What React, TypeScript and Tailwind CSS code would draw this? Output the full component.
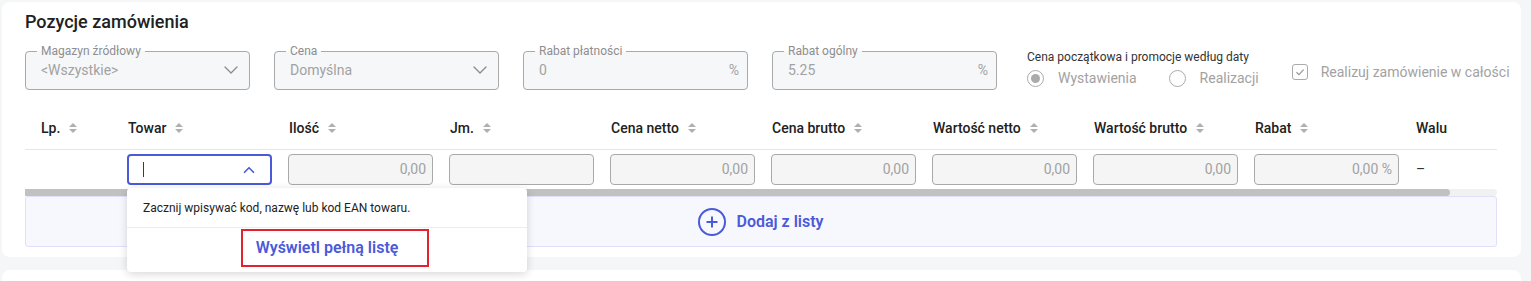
import React from "react";
import { ChevronDown, ChevronUp } from "lucide-react";

const SortIcon = () => (
  <svg width="10" height="12" viewBox="0 0 10 12" className="shrink-0">
    <path d="M5 1 L9 5 L1 5 Z" fill="#b0b0b0" />
    <path d="M5 11 L9 7 L1 7 Z" fill="#b0b0b0" />
  </svg>
);

const Field = ({ label, value, suffix, chevron }: { label: string; value: string; suffix?: string; chevron?: boolean }) => (
  <fieldset className="w-[225px] h-[46px] shrink-0 border border-[#a9a9a9] rounded-[4px] bg-[#f6f7f9] px-[11px] min-w-0">
    <legend className="px-[4px] text-[12px] leading-[14px] text-[#8e8e8e]">{label}</legend>
    <div className="flex items-center justify-between h-[24px] pl-[4px]">
      <span className="text-[14px] text-[#a2a2a2]">{value}</span>
      {chevron ? (
        <ChevronDown size={24} strokeWidth={1.3} color="#8a8a8a" className="mr-[-5px]" />
      ) : (
        <span className="text-[14px] text-[#a2a2a2] mr-[-3px]">{suffix}</span>
      )}
    </div>
  </fieldset>
);

const Radio = ({ checked, label }: { checked?: boolean; label: string }) => (
  <div className="flex items-center">
    <span className="w-[17px] h-[17px] rounded-full border border-[#ababab] flex items-center justify-center bg-white">
      {checked && <span className="w-[9px] h-[9px] rounded-full bg-[#ababab]" />}
    </span>
    <span className="ml-[14px] text-[14px] leading-[20px] text-[#a2a2a2]">{label}</span>
  </div>
);

const cols = ["Towar", "Ilość", "Jm.", "Cena netto", "Cena brutto", "Wartość netto", "Wartość brutto", "Rabat"];

const NumInput = ({ v }: { v: string }) => (
  <div className="w-[145px] h-[31px] border border-[#a9a9a9] rounded-[4px] bg-[#f5f5f5] flex items-center justify-end pr-[6px] text-[14px] text-[#a2a2a2]">
    {v}
  </div>
);

export default function App() {
  return (
    <div className="w-full h-[281px] overflow-hidden bg-[#f5f6f7] pt-[2px] pl-[2px] font-[family-name:Roboto,sans-serif] text-[#212121]">
      <div className="relative w-[1519px] h-[255px] bg-white rounded-[8px] pt-[8px] px-[23px]">
        <h2 className="text-[18px] leading-[24px] font-medium text-[#212121]">Pozycje zamówienia</h2>

        <div className="mt-[10px] flex items-start">
          <div className="flex gap-[24px]">
            <Field label="Magazyn źródłowy" value="<Wszystkie>" chevron />
            <Field label="Cena" value="Domyślna" chevron />
            <Field label="Rabat płatności" value="0" suffix="%" />
            <Field label="Rabat ogólny" value="5.25" suffix="%" />
          </div>
          <div className="ml-[30px] mt-[6px] flex flex-col">
            <span className="text-[12px] leading-[14px] text-[#333]">Cena początkowa i promocje według daty</span>
            <div className="mt-[4px] flex items-center gap-[32px]">
              <Radio checked label="Wystawienia" />
              <Radio label="Realizacji" />
            </div>
          </div>
          <div className="ml-[33px] mt-[18px] flex items-center h-[20px]">
            <span className="w-[16px] h-[16px] rounded-[3px] border border-[#ababab] flex items-center justify-center bg-white">
              <svg width="12" height="12" viewBox="0 0 12 12">
                <path d="M2.5 6.2 L5 8.6 L9.6 3.6" fill="none" stroke="#9a9a9a" strokeWidth="1.3" />
              </svg>
            </span>
            <span className="ml-[13px] text-[14px] text-[#a2a2a2] whitespace-nowrap">Realizuj zamówienie w całości</span>
          </div>
        </div>

        <div className="mt-[17px] w-[1472px] overflow-hidden">
          <div className="flex h-[43px] items-center border-b border-[#e4e4f8]">
            <div className="w-[95px] shrink-0 pl-[16px] flex items-center gap-[8px] text-[14px] font-medium">
              Lp. <SortIcon />
            </div>
            {cols.map((c) => (
              <div key={c} className="w-[161px] shrink-0 pl-[8px] flex items-center gap-[8px] text-[14px] font-medium whitespace-nowrap">
                {c} <SortIcon />
              </div>
            ))}
            <div className="w-[45px] shrink-0 pl-[8px] whitespace-nowrap text-[14px] font-medium">Walu</div>
            <div className="w-[44px] shrink-0" />
          </div>
          <div className="flex h-[39px] items-center">
            <div className="w-[95px] shrink-0" />
            <div className="w-[161px] shrink-0 pl-[7px]">
              <div className="w-[145px] h-[31px] border-2 border-[#4a5ad9] rounded-[4px] bg-white flex items-center justify-between pl-[14px] pr-[12px]">
                <span className="w-[1px] h-[15px] bg-[#2a3590]" />
                <ChevronUp size={18} strokeWidth={2.2} color="#4a5ad9" />
              </div>
            </div>
            <div className="w-[161px] shrink-0 pl-[7px]"><NumInput v="0,00" /></div>
            <div className="w-[161px] shrink-0 pl-[7px]"><NumInput v="" /></div>
            <div className="w-[161px] shrink-0 pl-[7px]"><NumInput v="0,00" /></div>
            <div className="w-[161px] shrink-0 pl-[7px]"><NumInput v="0,00" /></div>
            <div className="w-[161px] shrink-0 pl-[7px]"><NumInput v="0,00" /></div>
            <div className="w-[161px] shrink-0 pl-[7px]"><NumInput v="0,00" /></div>
            <div className="w-[161px] shrink-0 pl-[7px]"><NumInput v="0,00 %" /></div>
            <div className="w-[45px] shrink-0 pl-[8px] text-[14px] text-[#333]">–</div>
            <div className="w-[44px] shrink-0" />
          </div>
          <div className="h-[7px] bg-[#f1f1f1] rounded-r-[4px]">
            <div className="h-[7px] w-[1425px] bg-[#c1c1c1] rounded-r-[4px]" />
          </div>
          <div className="h-[51px] border border-[#e0e0fa] bg-[#f7f8fe] rounded-[3px] flex items-center justify-center gap-[10px]">
            <svg width="28" height="28" viewBox="0 0 28 28">
              <circle cx="14" cy="14" r="13" fill="none" stroke="#4a5ad9" strokeWidth="2" />
              <path d="M14 8.5 V19.5 M8.5 14 H19.5" stroke="#4a5ad9" strokeWidth="2" />
            </svg>
            <span className="text-[16px] font-semibold text-[#4a5ad9]">Dodaj z listy</span>
          </div>
        </div>

        <div className="absolute left-[125px] top-[186px] z-10 w-[400px] h-[84px] bg-white rounded-[4px] shadow-[0_2px_8px_rgba(0,0,0,0.16)]">
          <div className="h-[40px] border-b border-[#ececec] pl-[16px] flex items-center text-[12px] text-[#222]">
            Zacznij wpisywać kod, nazwę lub kod EAN towaru.
          </div>
          <div className="pt-[9px] flex justify-center">
            <span className="text-[16px] leading-[22px] font-semibold text-[#4a5ad9]">Wyświetl pełną listę</span>
          </div>
          <div className="absolute left-[114px] top-[41px] w-[188px] h-[38px] border-2 border-[#e2222c]" />
        </div>
      </div>
      <div className="mt-[13px] w-[1519px] h-[40px] bg-white rounded-[8px]" />
    </div>
  );
}
